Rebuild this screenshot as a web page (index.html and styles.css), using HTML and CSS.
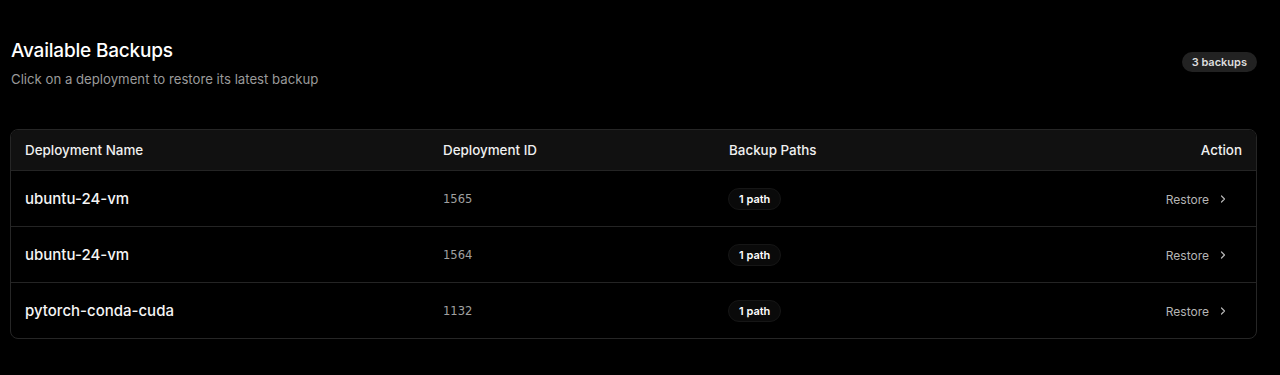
FILE: index.html
```html
<!DOCTYPE html>
<html lang="en">
<head>
  <meta charset="UTF-8">
  <title>Available Backups</title>
  <link rel="stylesheet" href="styles.css">
</head>
<body>
  <div class="page">
    <div class="head">
      <div>
        <h1 class="title">Available Backups</h1>
        <p class="subtitle">Click on a deployment to restore its latest backup</p>
      </div>
      <span class="count">3 backups</span>
    </div>

    <div class="table">
      <div class="row header">
        <div>Deployment Name</div>
        <div>Deployment ID</div>
        <div>Backup Paths</div>
        <div class="right">Action</div>
      </div>

      <div class="row">
        <div class="name">ubuntu-24-vm</div>
        <div class="id">1565</div>
        <div><span class="pill">1 path</span></div>
        <div class="right"><button class="restore">Restore <svg width="12" height="12" viewBox="0 0 24 24" fill="none" stroke="currentColor" stroke-width="2.4" stroke-linecap="round" stroke-linejoin="round"><path d="M9 6l6 6-6 6"/></svg></button></div>
      </div>

      <div class="row">
        <div class="name">ubuntu-24-vm</div>
        <div class="id">1564</div>
        <div><span class="pill">1 path</span></div>
        <div class="right"><button class="restore">Restore <svg width="12" height="12" viewBox="0 0 24 24" fill="none" stroke="currentColor" stroke-width="2.4" stroke-linecap="round" stroke-linejoin="round"><path d="M9 6l6 6-6 6"/></svg></button></div>
      </div>

      <div class="row">
        <div class="name">pytorch-conda-cuda</div>
        <div class="id">1132</div>
        <div><span class="pill">1 path</span></div>
        <div class="right"><button class="restore">Restore <svg width="12" height="12" viewBox="0 0 24 24" fill="none" stroke="currentColor" stroke-width="2.4" stroke-linecap="round" stroke-linejoin="round"><path d="M9 6l6 6-6 6"/></svg></button></div>
      </div>
    </div>
  </div>
</body>
</html>
```

FILE: styles.css
```css
body {
  margin: 0;
  background: #000;
  color: #fff;
  font-family: Inter, 'Noto Sans', sans-serif;
}
.page {
  padding: 38px 23px 0 10px;
}
.head {
  display: flex;
  justify-content: space-between;
  align-items: flex-start;
  padding-left: 1px;
}
.title {
  margin: 0;
  font-size: 19px;
  font-weight: 500;
  line-height: 26px;
  letter-spacing: -0.2px;
}
.subtitle {
  margin: 6px 0 0;
  font-size: 13.2px;
  color: #9a9a9a;
  line-height: 18px;
}
.count {
  margin-top: 14px;
  background: #222;
  color: #ddd;
  font-size: 11px;
  font-weight: 600;
  padding: 3px 10px;
  border-radius: 999px;
  line-height: 14px;
}
.table {
  margin-top: 41px;
  border: 1px solid #262626;
  border-radius: 8px;
  overflow: hidden;
}
.row {
  display: grid;
  grid-template-columns: 418px 286px 1fr 200px;
  align-items: center;
  height: 55px;
  padding: 0 14px;
  border-top: 1px solid #242424;
}
.row.header {
  height: 40px;
  border-top: none;
  background: #111;
  font-size: 13.4px;
  font-weight: 500;
  color: #f0f0f0;
}
.right {
  text-align: right;
}
.name {
  font-size: 15px;
  font-weight: 500;
  color: #f5f5f5;
}
.id {
  font-family: 'DejaVu Sans', sans-serif;
  font-size: 11.5px;
  color: #a0a0a0;
}
.pill {
  display: inline-block;
  margin-left: -1px;
  background: #0a0a0a;
  border: 1px solid #161616;
  color: #fff;
  font-size: 11px;
  font-weight: 600;
  padding: 3px 10px;
  border-radius: 999px;
  line-height: 14px;
}
.restore {
  display: inline-flex;
  align-items: center;
  gap: 8px;
  margin: 0 13px 3px 0;
  background: none;
  border: none;
  color: #b5b5b5;
  font-family: inherit;
  font-size: 12px;
  cursor: pointer;
  padding: 0;
}
```
